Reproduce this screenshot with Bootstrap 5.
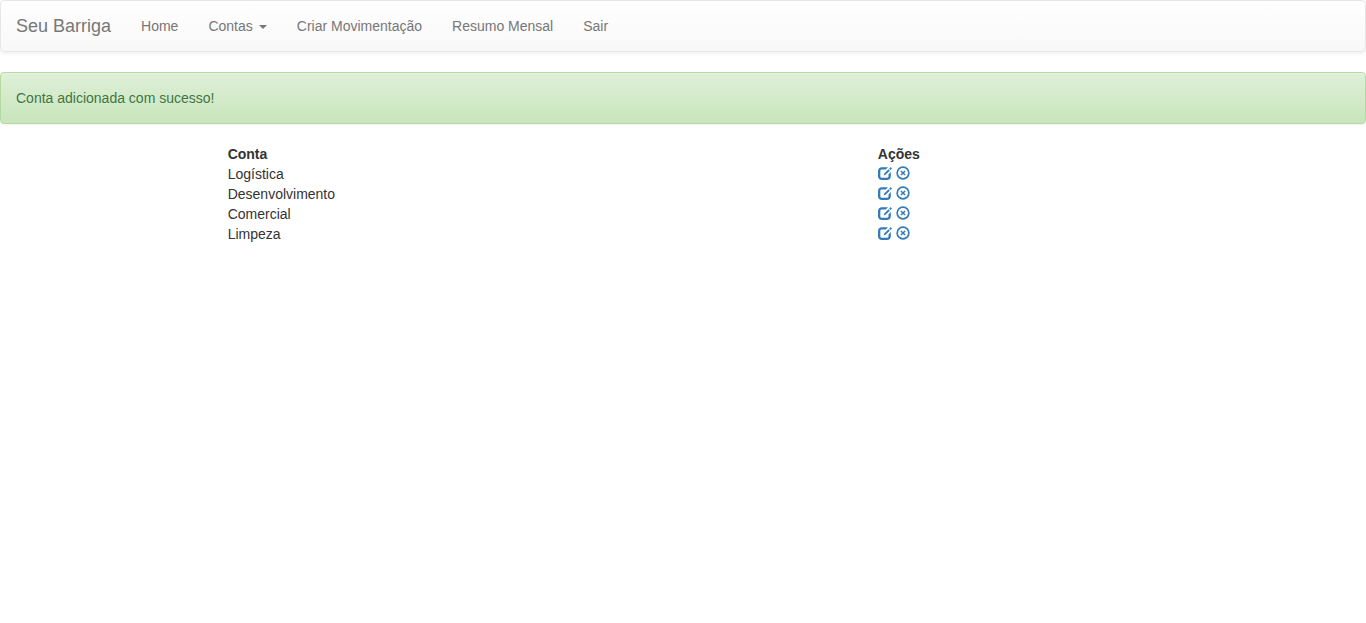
<!DOCTYPE html>
<html lang="pt-BR">
<head>
<meta charset="utf-8">
<meta name="viewport" content="width=device-width, initial-scale=1">
<title>Seu Barriga - Contas</title>
<link href="https://cdn.jsdelivr.net/npm/bootstrap@5.3.0/dist/css/bootstrap.min.css" rel="stylesheet">
<style>
  body {
    font-family: "Liberation Sans", Arial, sans-serif;
    font-size: 14px;
    line-height: 20px;
    color: #333;
  }
  .main-bar {
    --bs-navbar-color: #777;
    --bs-navbar-hover-color: #333;
    --bs-navbar-brand-color: #777;
    --bs-navbar-nav-link-padding-x: 15px;
    min-height: 52px;
    background: linear-gradient(to bottom, #fff, #f8f8f8);
    border-color: #e7e7e7 !important;
    box-shadow: inset 0 1px 0 rgba(255, 255, 255, .15), 0 1px 5px rgba(0, 0, 0, .075);
    text-shadow: 0 1px 0 rgba(255, 255, 255, .25);
  }
  .main-bar, .notice { margin-bottom: 20px; border-radius: 4px; }
  .main-bar .navbar-brand { padding: 15px; font-size: 18px; line-height: 20px; }
  .main-bar .nav-link { padding-top: 15px; padding-bottom: 15px; }
  .main-bar .dropdown-toggle::after {
    margin-left: 6px;
    border-top: 4px solid;
    border-right: 4px solid transparent;
    border-left: 4px solid transparent;
    vertical-align: middle;
  }
  .main-bar .dropdown-menu { font-size: 14px; }
  .notice {
    padding: 15px;
    color: #3c763d;
    background: linear-gradient(to bottom, #dff0d8, #c8e5bc);
    border-color: #b2dba1;
    box-shadow: inset 0 1px 0 rgba(255, 255, 255, .25), 0 1px 2px rgba(0, 0, 0, .05);
    text-shadow: 0 1px 0 rgba(255, 255, 255, .2);
  }
  .accounts th, .accounts td { padding: 0; }
  .account-name { width: 71.4%; }
  .actions { padding-bottom: 2px; }
  .action { color: #337ab7; }
  .action svg { width: 14px; height: 14px; display: block; }
</style>
</head>
<body>
<nav class="navbar navbar-expand main-bar border p-0">
  <div class="container-fluid p-0 justify-content-start">
    <a class="navbar-brand m-0" href="#">Seu Barriga</a>
    <ul class="navbar-nav">
      <li class="nav-item"><a class="nav-link" href="#">Home</a></li>
      <li class="nav-item dropdown">
        <a class="nav-link dropdown-toggle" href="#" role="button" data-bs-toggle="dropdown" aria-expanded="false">Contas</a>
        <ul class="dropdown-menu">
          <li><a class="dropdown-item" href="#">Adicionar</a></li>
          <li><a class="dropdown-item" href="#">Listar</a></li>
        </ul>
      </li>
      <li class="nav-item"><a class="nav-link" href="#">Criar Movimentação</a></li>
      <li class="nav-item"><a class="nav-link" href="#">Resumo Mensal</a></li>
      <li class="nav-item"><a class="nav-link" href="#">Sair</a></li>
    </ul>
  </div>
</nav>

<div class="alert notice" role="alert">Conta adicionada com sucesso!</div>

<svg class="d-none" aria-hidden="true">
  <symbol id="icon-edit" viewBox="0 0 1200 1200">
    <path fill="currentColor" transform="matrix(1 0 0 -1 0 1200)" d="M350 1100h400q50 0 105 -13l-187 -187h-368q-41 0 -70.5 -29.5t-29.5 -70.5v-500q0 -41 29.5 -70.5t70.5 -29.5h500q41 0 70.5 29.5t29.5 70.5v182l200 200v-332q0 -165 -92.5 -257.5t-257.5 -92.5h-400q-165 0 -257.5 92.5t-92.5 257.5v400q0 165 92.5 257.5t257.5 92.5zM1009 803l-362 -362l-161 -50l55 170l355 355zM1069 861l-113 113l112 112q7 7 17.5 7t17.5 -7l78 -78q7 -7 7 -17.5t-7 -17.5z"/>
  </symbol>
  <symbol id="icon-remove" viewBox="0 0 1200 1200">
    <circle cx="600" cy="600" r="500" fill="none" stroke="currentColor" stroke-width="145"/>
    <path d="M420 420L780 780M780 420L420 780" fill="none" stroke="currentColor" stroke-width="125"/>
  </symbol>
</svg>

<main class="container-fluid p-0">
  <div class="row g-0">
    <div class="col-8 offset-2">
      <table class="accounts w-100">
        <thead>
          <tr><th class="account-name" scope="col">Conta</th><th scope="col">Ações</th></tr>
        </thead>
        <tbody>
          <tr><td>Logística</td><td><div class="actions d-flex gap-1"><a class="action" href="#" aria-label="Editar Logística"><svg><use href="#icon-edit"/></svg></a><a class="action" href="#" aria-label="Remover Logística"><svg><use href="#icon-remove"/></svg></a></div></td></tr>
          <tr><td>Desenvolvimento</td><td><div class="actions d-flex gap-1"><a class="action" href="#" aria-label="Editar Desenvolvimento"><svg><use href="#icon-edit"/></svg></a><a class="action" href="#" aria-label="Remover Desenvolvimento"><svg><use href="#icon-remove"/></svg></a></div></td></tr>
          <tr><td>Comercial</td><td><div class="actions d-flex gap-1"><a class="action" href="#" aria-label="Editar Comercial"><svg><use href="#icon-edit"/></svg></a><a class="action" href="#" aria-label="Remover Comercial"><svg><use href="#icon-remove"/></svg></a></div></td></tr>
          <tr><td>Limpeza</td><td><div class="actions d-flex gap-1"><a class="action" href="#" aria-label="Editar Limpeza"><svg><use href="#icon-edit"/></svg></a><a class="action" href="#" aria-label="Remover Limpeza"><svg><use href="#icon-remove"/></svg></a></div></td></tr>
        </tbody>
      </table>
    </div>
  </div>
</main>
<script src="https://cdn.jsdelivr.net/npm/bootstrap@5.3.0/dist/js/bootstrap.bundle.min.js"></script>
</body>
</html>
